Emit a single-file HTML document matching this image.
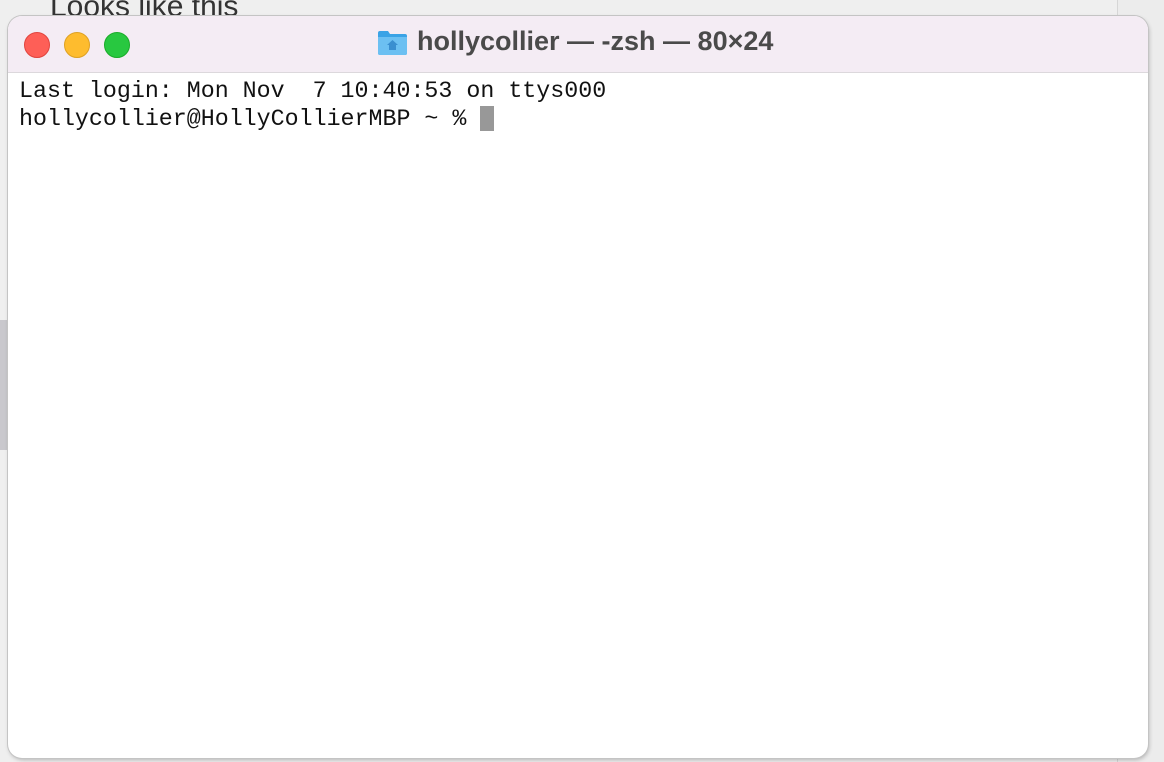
<!DOCTYPE html>
<html><head><style>
html,body{margin:0;padding:0;width:1164px;height:762px;overflow:hidden;background:#efefef;font-family:"Liberation Sans",sans-serif;}
.bgtext{position:absolute;left:50px;top:-10px;font-size:30px;color:#333;}
.strip{position:absolute;left:1117px;top:0;width:47px;height:762px;background:#ececec;border-left:1px solid #d6d6d6;}
.lside{position:absolute;left:0;top:320px;width:10px;height:130px;background:#c9c8cd;}
.win{position:absolute;left:8px;top:16px;width:1140px;height:742px;background:#fff;border-radius:14px;box-shadow:0 0 0 1px #c4c4c4,1px 2px 4px rgba(0,0,0,.25);overflow:hidden;}
.tb{height:56px;background:#f4ecf4;border-bottom:1px solid #dcd8dc;position:relative;}
.dot{position:absolute;top:16px;width:24px;height:24px;border-radius:50%;}
.title{position:absolute;left:409px;top:10px;font-size:27px;font-weight:bold;color:#4a4a4a;white-space:nowrap;}
.term{position:absolute;left:11px;top:61px;font-family:"Liberation Mono",monospace;font-size:23.3px;line-height:28px;color:#111;white-space:pre;}
.cur{position:absolute;left:472px;top:90px;width:14px;height:25px;background:#989898;}
</style></head><body>
<div class="bgtext">Looks like this</div>
<div class="strip"></div>
<div class="lside"></div>
<div class="win">
 <div class="tb">
  <div class="dot" style="left:16px;background:#fe5f57;border:0.5px solid #e0443e"></div>
  <div class="dot" style="left:56px;background:#febc2e;border:0.5px solid #dea123"></div>
  <div class="dot" style="left:96px;background:#28c840;border:0.5px solid #1aab29"></div>
  <svg style="position:absolute;left:369px;top:13px" width="31" height="27" viewBox="0 0 31 27">
   <path d="M1 4 Q1 2 3 2 H11 L13 5 H28 Q30 5 30 7 V24 Q30 26 28 26 H3 Q1 26 1 24 Z" fill="#3aa3e6"/>
   <path d="M1 8 H30 V24 Q30 26 28 26 H3 Q1 26 1 24 Z" fill="#6cc0f2"/>
   <path d="M15.5 11 L10 16 H12 V21 H19 V16 H21 Z" fill="#3a8fd0"/>
  </svg>
  <div class="title">hollycollier — -zsh — 80×24</div>
 </div>
 <div class="term">Last login: Mon Nov  7 10:40:53 on ttys000
hollycollier@HollyCollierMBP ~ % </div>
 <div class="cur"></div>
</div>
</body></html>
